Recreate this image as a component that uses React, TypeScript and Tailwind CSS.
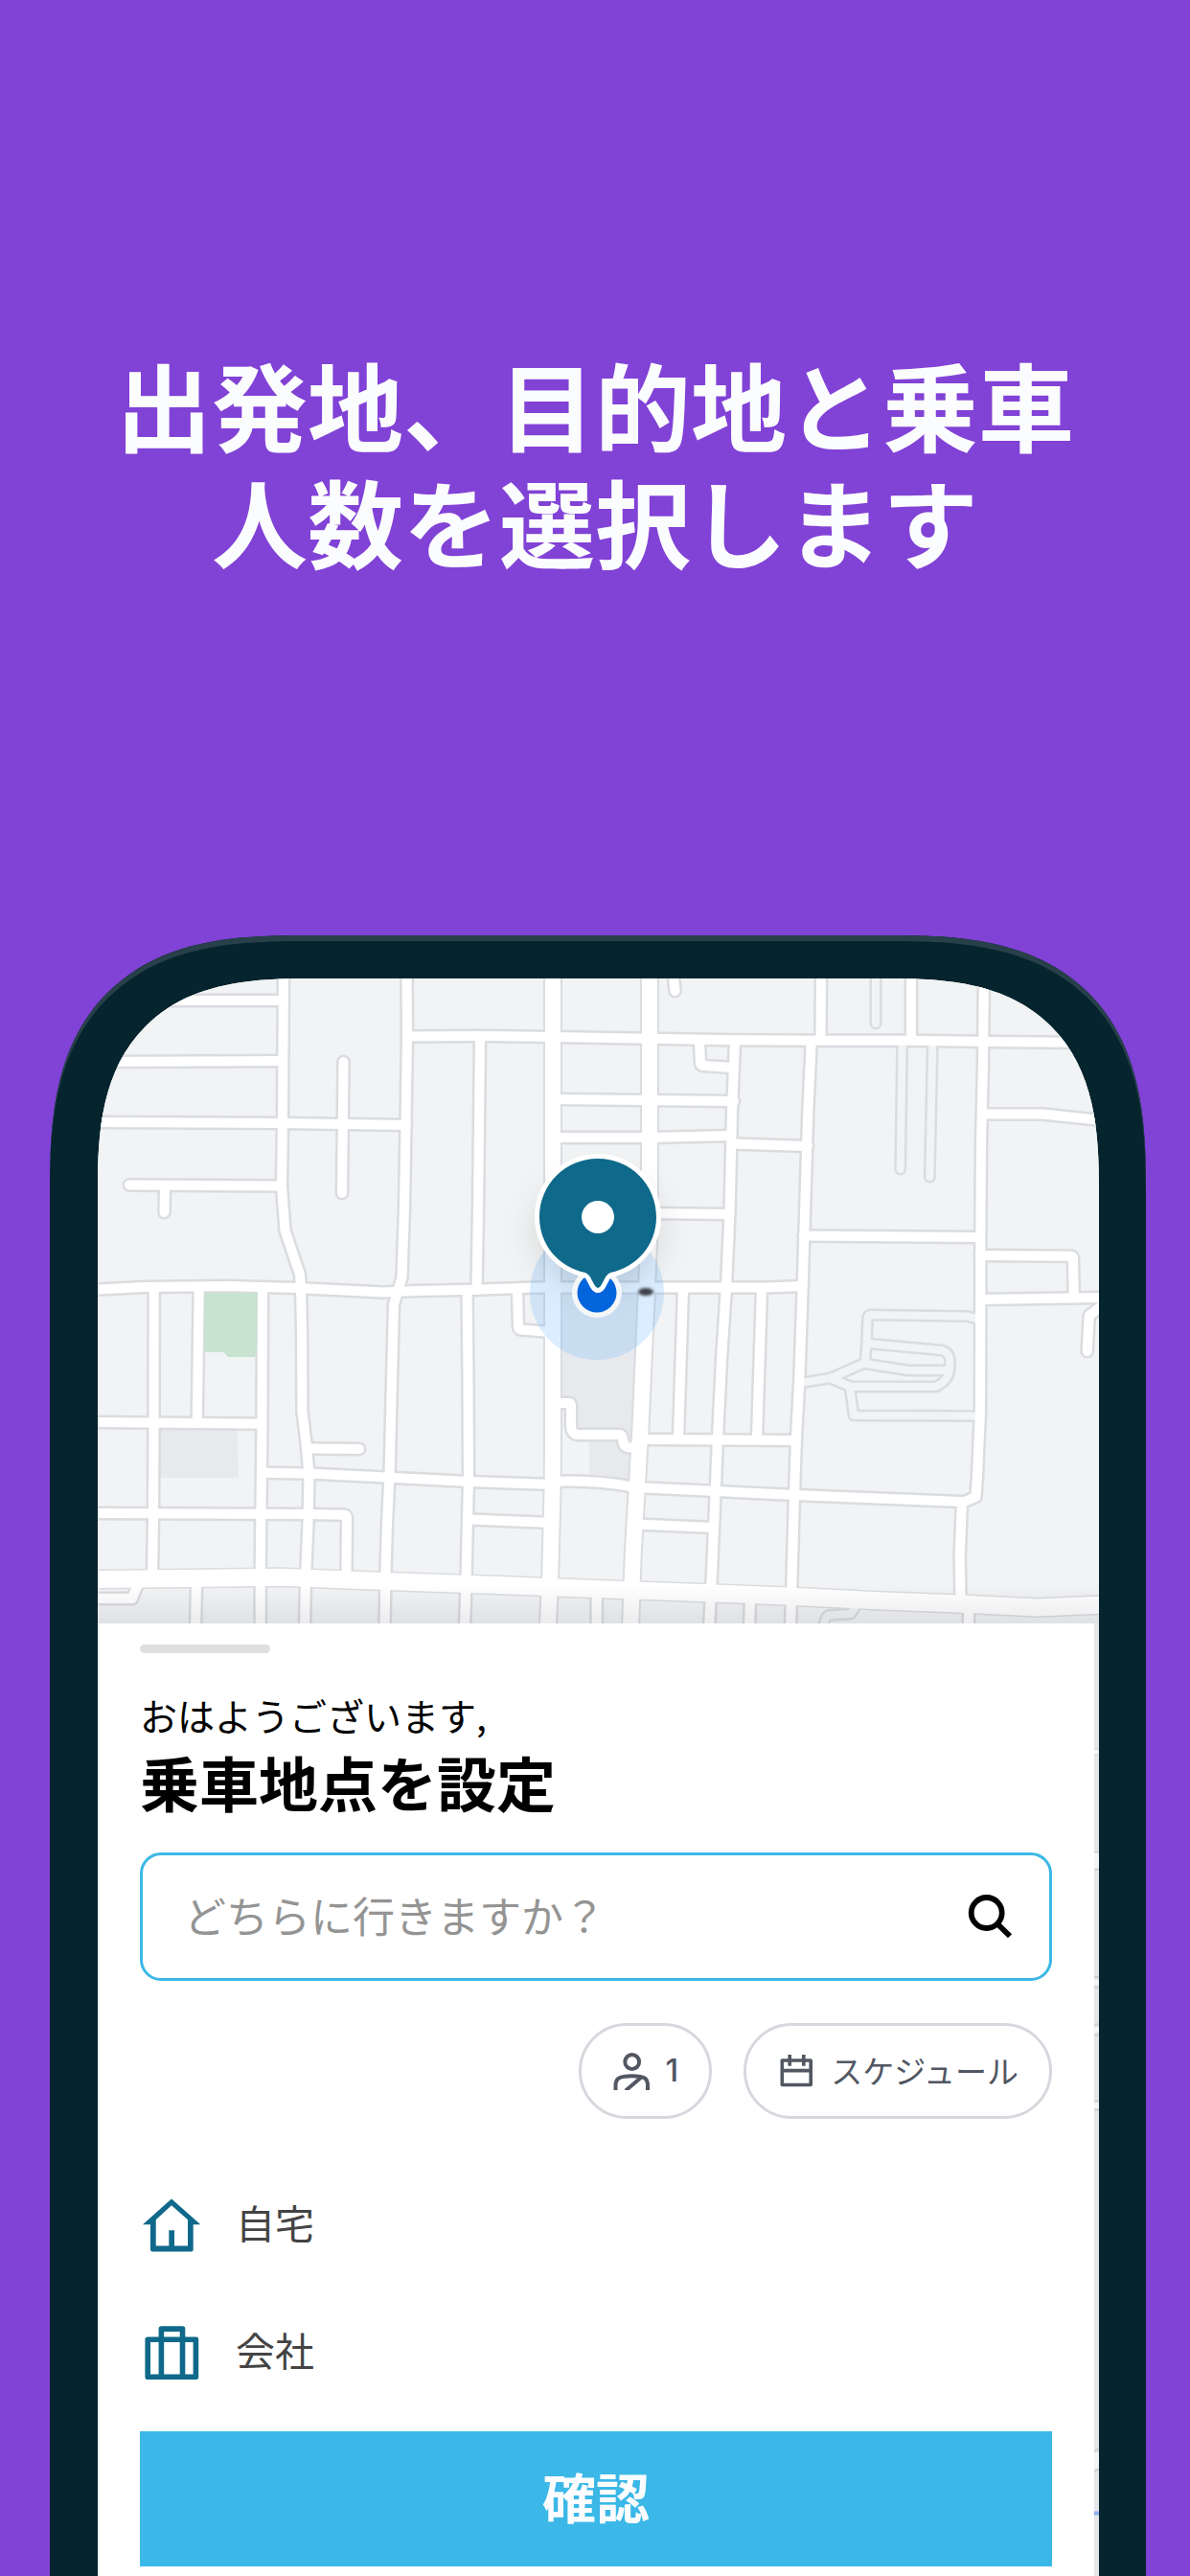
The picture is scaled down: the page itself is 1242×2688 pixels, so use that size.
import React, { useState } from 'react';

const minorRoads = [
  'M914 1010V1068',
  'M941.7 1088L939.7 1220',
  'M973.3 1088L970.3 1228',
  'M1022 1377L1010 1373.5L908 1372Q905.5 1373 905.5 1377L904.5 1400L903 1422L867 1438L839 1442.5',
  'M907 1402L983 1409Q991 1411 991.5 1420L991 1430Q990 1440 977 1447L888 1447L867 1438',
  'M903 1423L948 1430H990',
  'M867 1438L887 1447L891 1477L1022 1477.5',
  'M859 1700Q861 1686 865 1685.5L888 1684L892 1678',
];

const roads = [
  'M100 1044H296',
  'M100 1108L294 1107',
  'M100 1171L292 1172L424 1174',
  'M135 1236.5L294 1237.5',
  'M172 1237L171.5 1265',
  'M296 1010L295 1170L294 1238L297.5 1284L313 1330L314 1345L315 1390L315.5 1473L320 1510L322.5 1540L321.5 1590L319 1647L318 1700',
  'M358.5 1108L357 1245',
  'M100 1345.5L150 1343L240 1342L310 1344L400 1348.5L433 1347L495 1345.7L560 1343.5H800L838 1342',
  'M424.5 1010L425 1083L423.5 1173L422 1260L419.5 1333L411 1361L409 1440L406.5 1540L404 1590L402.5 1640L401.5 1700',
  'M425 1081.5L500 1081L577 1082L678 1083.7L767 1085.3L857 1085.7H950L1027 1087L1150 1088',
  'M501 1083L500 1173L499 1260L497.5 1346',
  'M487.5 1349L488.5 1437L489 1545L487.5 1604L486.5 1652L485 1700',
  'M577 1147L766 1149',
  'M577 1187H680L763 1185',
  'M678 1266L760 1267',
  'M767 1087L764 1160L761.7 1260L758 1343L753 1419L749 1500L746.7 1556L743 1641L740 1700',
  'M730 1087L731 1109Q731 1112 734 1112L764 1114',
  'M702 1010L704.5 1034',
  'M765 1193.5L843 1196',
  'M857 1010L856.5 1085',
  'M846.7 1088L843.3 1160L839.3 1290L837.7 1343L834.3 1440L831 1500L829 1560L826.7 1640L825 1700',
  'M951 1010V1085',
  'M1027 1010L1026 1110L1024 1193L1023.3 1293V1340L1023 1473L1020 1540L1018.5 1562L1004 1568L1001.7 1623L1002.5 1667',
  'M1011 1680V1700',
  'M1026 1162.5H1088L1150 1169',
  'M839 1289.5L1023 1291',
  'M1023 1310L1118 1310.7Q1120 1311 1120 1314L1120.7 1350',
  'M1023 1356L1150 1354',
  'M1152 1361L1136.7 1373L1134.7 1410',
  'M277 1536.7L327 1537.7L407 1541.7L489 1546L577 1549',
  'M577 1546Q620 1544 663 1552L747 1556L829 1560L1004 1567',
  'M669 1502L829 1503',
  'M713 1345L708 1500',
  'M795 1345L790 1500',
  'M664 1590.5L745 1594',
  'M489 1585.5L576 1589',
  'M540 1347L541 1384Q541 1387 544 1387.5L576 1390',
  'M577 1464H594Q596 1464 596 1467V1488Q597 1497 603 1497H646Q650 1497 650 1502Q650 1509 656 1510.5H664',
  'M160.7 1345L160.5 1483L160 1580L159 1645',
  'M207.7 1345L205.7 1484',
  'M274 1345L273.5 1483L271.7 1640V1700',
  'M100 1484L272 1485.7',
  'M100 1579L320 1580L359 1580.7Q362 1581 362 1584L361.5 1645',
  'M322 1511.5L375 1512',
  'M205 1655L204 1700',
  'M100 1668H138L143 1655',
  'M622.7 1665V1700',
  'M783 1668L782 1700',
];

const majorRoads = [
  'M577 1010V1493L576.7 1548L574 1652L571.7 1700',
  'M678 1010V1271L675 1345L668.3 1493L665 1548L660.7 1622L658 1700',
];

const mainStreet =
  'M95 1648L217 1646.7L293 1645.7L403 1650L520 1654L620 1658L703 1661L820 1665.5L910 1670L1000 1673.5L1083 1677.5L1150 1674.5';

const pin =
  'M624 1209C590 1209 563 1236 563 1270C563 1299 583 1322 611 1328Q614 1329 616 1332.5L620.5 1341Q624 1347 627.5 1341L632 1332.5Q634 1329 637 1328C665 1322 685 1299 685 1270C685 1236 658 1209 624 1209Z';

const CityMap: React.FC = () => (
  <svg viewBox="102 1021 1045 673" className="block w-full h-auto" aria-hidden="true">
    <defs>
      <linearGradient id="sheetShade" x1="0" y1="0" x2="0" y2="1">
        <stop offset="0" stopColor="#3c3c50" stopOpacity="0" />
        <stop offset="1" stopColor="#3c3c50" stopOpacity="0.1" />
      </linearGradient>
      <filter id="soft" x="-50%" y="-50%" width="200%" height="200%">
        <feGaussianBlur stdDeviation="18" />
      </filter>
      <filter id="softSmall" x="-50%" y="-50%" width="200%" height="200%">
        <feGaussianBlur stdDeviation="1.6" />
      </filter>
    </defs>
    <rect x="102" y="1021" width="1045" height="673" fill="#f1f3f4" />
    <path d="M580 1350H674L667 1512H580Z" fill="#e8e9ed" />
    <path d="M587 1464H596V1500H615V1545H587Z" fill="#f1f3f4" />
    <path d="M615 1500H664V1548H615Z" fill="#e8e9ed" />
    <path d="M166 1491H247.500L249 1542H166Z" fill="#e8e9ed" />

    <g fill="none" strokeLinecap="round" strokeLinejoin="round">
      <g stroke="#dadce0" strokeWidth="13">
        {minorRoads.map((d) => <path key={d} d={d} />)}
      </g>
      <g stroke="#dadce0" strokeWidth="15">
        {roads.map((d) => <path key={d} d={d} />)}
      </g>
      <g stroke="#dadce0" strokeWidth="20">
        {majorRoads.map((d) => <path key={d} d={d} />)}
        <path d={mainStreet} strokeWidth="21" />
      </g>
      <path d="M213 1349H268.500V1403L266 1416H238L234 1411H213Z" fill="#c8e3cf" />
      <g stroke="#f1f3f4" strokeWidth="8">
        {minorRoads.map((d) => <path key={d} d={d} />)}
      </g>
      <g stroke="#fff" strokeWidth="10">
        {roads.map((d) => <path key={d} d={d} />)}
      </g>
      <g stroke="#fff" strokeWidth="16">
        {majorRoads.map((d) => <path key={d} d={d} />)}
        <path d={mainStreet} strokeWidth="18" />
      </g>
    </g>
    <rect x="102" y="1654" width="1045" height="40" fill="url(#sheetShade)" />

    {/* current location */}
    <circle cx="623" cy="1349" r="70" fill="#5ab0ff" fillOpacity="0.22" />
    <ellipse cx="624" cy="1286" rx="62" ry="56" fill="#000" fillOpacity="0.14" filter="url(#soft)" />
    <ellipse cx="674" cy="1348" rx="8" ry="4" fill="#3c4149" filter="url(#softSmall)" />
    <circle cx="623" cy="1349" r="26" fill="#f4f6f8" />
    <circle cx="623" cy="1349" r="20.5" fill="#0265dc" />

    {/* pickup pin */}
    <path d={pin} fill="#fff" stroke="#fff" strokeWidth="10" strokeLinejoin="round" />
    <path d={pin} fill="#0f698a" />
    <circle cx="624" cy="1270" r="17" fill="#fff" />
  </svg>
);

// the sliver of map left visible beside the sheet
const MapEdge: React.FC = () => (
  <svg viewBox="0 1694 5 994" preserveAspectRatio="none" className="w-[5px] shrink-0 bg-[#e4e6ea]" aria-hidden="true">
    <path d="M0 1825.500H5M0 1830.500H5M0 1932.500H5M0 1950.500H5M0 2063H5M0 2074H5M0 2112.500H5M0 2123.500H5M0 2192.500H5M0 2201.500H5M0 2558L5 2555M0 2579L5 2576" stroke="#cdd0d6" strokeWidth="2" />
    <path d="M0 1828H5M0 2068.500H5M0 2118H5M0 2197H5" stroke="#f4f5f7" strokeWidth="5" />
    <path d="M0 1941.500H5M0 2567.500H5" stroke="#f4f5f7" strokeWidth="16" />
    <path d="M0 2622.500H5" stroke="#8fb0ee" strokeWidth="4" />
  </svg>
);

const HomeIcon = () => (
  <svg viewBox="0 0 64 64" className="size-16 shrink-0" fill="#0f698a" aria-hidden="true">
    <path fillRule="evenodd" d="M31.500 8.700Q33 7 34.500 8.700L63.300 34.200H55.700V60.500Q55.700 62.500 53.700 62.500H13Q11 62.500 11 60.500V34.200H3ZM33 14.200L50 29.200V56.500H36V40.200H30.300V56.500H16.700V29.200Z" />
  </svg>
);

const WorkIcon = () => (
  <svg viewBox="0 0 64 64" className="size-16 shrink-0" fill="none" stroke="#0f698a" strokeWidth="5.6" strokeLinejoin="round" aria-hidden="true">
    <rect x="8.200" y="21.300" width="50.200" height="39" />
    <path d="M22.400 60V10.100H44.500V60" />
  </svg>
);

const PersonIcon = () => (
  <svg viewBox="0 0 40 40" className="size-10 shrink-0" fill="none" stroke="#525762" strokeWidth="4" aria-hidden="true">
    <circle cx="20.700" cy="10.500" r="7.400" />
    <path d="M3.500 40V35C3.500 28 7 25.300 20.700 25.300C34 25.300 37 28 37 35V40M14 40.500L31 26" />
  </svg>
);

const CalendarIcon = () => (
  <svg viewBox="0 0 40 40" className="size-10 shrink-0" fill="none" stroke="#525762" strokeWidth="3.6" strokeLinejoin="round" aria-hidden="true">
    <path d="M5.300 9H35.200V34.500H5.300ZM5.300 19.600H35.200M13.200 3V14.700M27.800 3V14.700" />
  </svg>
);

const SearchIcon = () => (
  <svg viewBox="0 0 48 48" className="size-12" fill="none" stroke="#000" strokeWidth="5.8" aria-hidden="true">
    <circle cx="20.700" cy="20" r="16" />
    <path d="M32 31.500L45 44.300" />
  </svg>
);

const places = [
  { label: '自宅', Icon: HomeIcon },
  { label: '会社', Icon: WorkIcon },
];

const App: React.FC = () => {
  const [query, setQuery] = useState('');

  return (
    <main
      lang="ja"
      className="min-h-screen overflow-hidden bg-[#8142d6] font-['Noto_Sans_CJK_JP','Noto_Sans',sans-serif]"
    >
      <h1 className="pt-[360px] text-center text-[100px] leading-[122px] font-bold text-[#fbfcfe]">
        出発地、目的地と乗車
        <br />
        人数を選択します
      </h1>

      {/* Phone */}
      <div className="mt-[372px] mr-[46px] ml-[52px] rounded-t-[205px] bg-[#05242d] pt-[45px] pr-[49px] pl-[50px] shadow-[inset_0_6px_0_#274049] supports-[corner-shape:squircle]:rounded-t-[265px] [corner-shape:superellipse(1.43)]">
        <div className="overflow-hidden rounded-t-[170px] bg-white supports-[corner-shape:squircle]:rounded-t-[220px] [corner-shape:superellipse(1.43)]">
          <CityMap />

          <div className="flex">
            <section className="flex-1 bg-white px-11 pt-[22px] pb-[10px]">
              <div className="h-[9px] w-[136px] rounded-full bg-[#dfdfdf]" />
              <p className="mt-[39px] text-[39px] leading-[50px] text-black">おはようございます,</p>
              <h2 className="mt-[5px] text-[62px] leading-[80px] font-bold text-black">乗車地点を設定</h2>

              <form
                className="mt-[34px] flex h-[134px] items-center rounded-[22px] border-[3px] border-[#3bb8e7] pr-[38px] pl-[43px]"
                onSubmit={(e) => e.preventDefault()}
              >
                <input
                  type="text"
                  aria-label="目的地"
                  value={query}
                  onChange={(e) => setQuery(e.target.value)}
                  placeholder="どちらに行きますか？"
                  className="h-full min-w-0 flex-1 bg-transparent pb-1 text-[44px] text-black placeholder:text-[#949494] focus:outline-none"
                />
                <button type="submit" aria-label="検索">
                  <SearchIcon />
                </button>
              </form>

              <div className="mt-11 flex justify-end gap-[33px] text-[33px] text-[#525762]">
                <button className="flex h-[100px] items-center gap-4 rounded-full border-[3px] border-[#d7d8de] px-8 font-['Inter',sans-serif] font-medium">
                  <PersonIcon />
                  1
                </button>
                <button className="flex h-[100px] items-center gap-4 rounded-full border-[3px] border-[#d7d8de] px-8">
                  <CalendarIcon />
                  スケジュール
                </button>
              </div>

              <ul className="mt-[41px]">
                {places.map(({ label, Icon }) => (
                  <li key={label}>
                    <button className="flex h-[133px] w-full items-center gap-9 text-[41px] text-[#444444]">
                      <Icon />
                      {label}
                    </button>
                  </li>
                ))}
              </ul>

              <button className="mt-[19px] h-[141px] w-full bg-[#3bb8e7] pb-2 text-[56px] leading-[80px] font-bold text-[#fbfcfe]">
                確認
              </button>
            </section>
            <MapEdge />
          </div>
        </div>
      </div>
    </main>
  );
};

export default App;
